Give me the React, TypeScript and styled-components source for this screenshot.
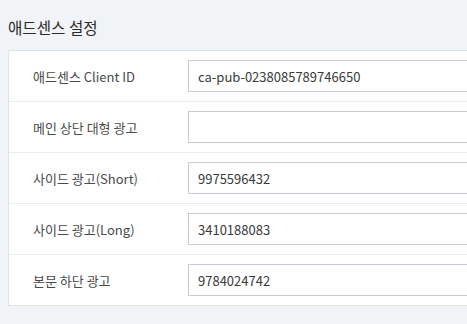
import { FC } from 'react';
import styled, { createGlobalStyle } from 'styled-components';

const GlobalStyle = createGlobalStyle`
  html, body {
    margin: 0;
    padding: 0;
    background: #f1f4f7;
    font-family: 'Noto Sans CJK KR', 'Noto Sans', sans-serif;
    overflow: hidden;
  }
`;

const Page = styled.div`
  width: 467px;
  height: 324px;
  padding: 0 0 0 8px;
  box-sizing: border-box;
`;

const Title = styled.h2`
  margin: 0;
  height: 50px;
  padding-top: 17px;
  box-sizing: border-box;
  font-size: 15.6px;
  font-weight: 400;
  color: #2a2a2a;
  line-height: 20px;
`;

const Panel = styled.div`
  width: 480px;
  background: #fff;
  border: 1px solid #dfe3ea;
  border-right: none;
`;

const Row = styled.div`
  display: flex;
  align-items: center;
  height: 50px;
  & + & {
    border-top: 1px solid #e9edf1;
  }
`;

const Label = styled.label`
  width: 179px;
  flex: none;
  padding-left: 24px;
  box-sizing: border-box;
  font-size: 13px;
  color: #4a4a4a;
`;

const Input = styled.input`
  width: 300px;
  height: 32px;
  box-sizing: border-box;
  border: 1px solid #c5cdd9;
  padding: 0 9px;
  font-family: 'Noto Sans CJK KR', 'Noto Sans', sans-serif;
  font-size: 13px;
  color: #3a3a3a;
  outline: none;
`;

const rows = [
  { label: '애드센스 Client ID', value: 'ca-pub-0238085789746650' },
  { label: '메인 상단 대형 광고', value: '' },
  { label: '사이드 광고(Short)', value: '9975596432' },
  { label: '사이드 광고(Long)', value: '3410188083' },
  { label: '본문 하단 광고', value: '9784024742' },
];

const App: FC = () => {
  return (
    <>
      <GlobalStyle />
      <Page>
        <Title>애드센스 설정</Title>
        <Panel>
          {rows.map((r) => (
            <Row key={r.label}>
              <Label>{r.label}</Label>
              <Input defaultValue={r.value} />
            </Row>
          ))}
        </Panel>
      </Page>
    </>
  );
};

export default App;
